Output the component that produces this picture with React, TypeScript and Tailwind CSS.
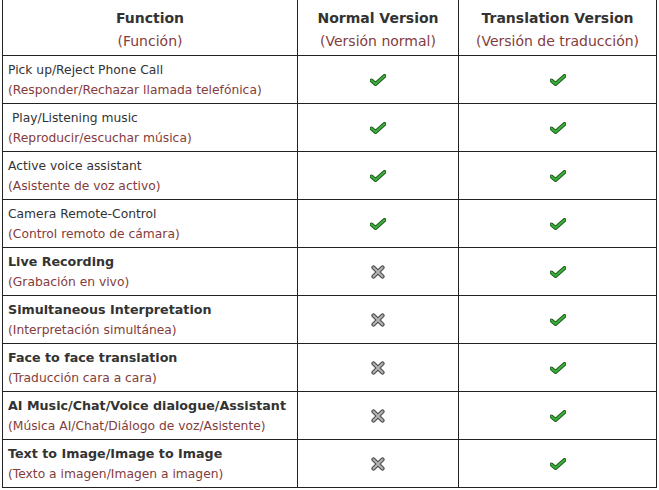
type Row = {
  en: string
  es: string
  bold?: boolean
  normal: boolean
}

const rows: Row[] = [
  { en: "Pick up/Reject Phone Call", es: "(Responder/Rechazar llamada telefónica)", normal: true },
  { en: "\u00a0Play/Listening music", es: "(Reproducir/escuchar música)", normal: true },
  { en: "Active voice assistant", es: "(Asistente de voz activo)", normal: true },
  { en: "Camera Remote-Control", es: "(Control remoto de cámara)", normal: true },
  { en: "Live Recording", es: "(Grabación en vivo)", bold: true, normal: false },
  { en: "Simultaneous Interpretation", es: "(Interpretación simultánea)", bold: true, normal: false },
  { en: "Face to face translation", es: "(Traducción cara a cara)", bold: true, normal: false },
  { en: "AI Music/Chat/Voice dialogue/Assistant", es: "(Música AI/Chat/Diálogo de voz/Asistente)", bold: true, normal: false },
  { en: "Text to Image/Image to Image", es: "(Texto a imagen/Imagen a imagen)", bold: true, normal: false },
]

function Check() {
  return (
    <svg width="16" height="12" viewBox="0 0 16 12" className="inline-block">
      <path
        d="M1.5 6.5 L5.5 10 L14.5 2"
        fill="none"
        stroke="#1f5f1f"
        strokeWidth="4"
        strokeLinecap="round"
        strokeLinejoin="round"
      />
      <path
        d="M1.5 6.5 L5.5 10 L14.5 2"
        fill="none"
        stroke="#3fae3f"
        strokeWidth="2"
        strokeLinecap="round"
        strokeLinejoin="round"
      />
    </svg>
  )
}

function Cross() {
  return (
    <svg width="14" height="14" viewBox="0 0 14 14" className="inline-block">
      <path d="M2.5 2.5 L11.5 11.5 M11.5 2.5 L2.5 11.5" stroke="#4a4a4a" strokeWidth="4.2" strokeLinecap="round" />
      <path d="M2.5 2.5 L11.5 11.5 M11.5 2.5 L2.5 11.5" stroke="#b4b4b4" strokeWidth="2" strokeLinecap="round" />
    </svg>
  )
}

export default function App() {
  return (
    <div className="bg-white pl-[2px] pt-0 font-['DejaVu_Sans',Verdana,sans-serif] text-[#333]">
      <table className="w-[654px] table-fixed border-collapse -mt-px">
        <colgroup>
          <col className="w-[295px]" />
          <col className="w-[161px]" />
          <col className="w-[198px]" />
        </colgroup>
        <thead>
          <tr className="h-[56px]">
            {[
              ["Function", "(Función)"],
              ["Normal Version", "(Versión normal)"],
              ["Translation Version", "(Versión de traducción)"],
            ].map(([en, es]) => (
              <th key={en} className="border border-[#222] p-0 pt-[4px] text-center align-middle">
                <div className="text-[14px] font-bold leading-[23px]">{en}</div>
                <div className="text-[14px] font-normal leading-[23px] text-[#843c3c]">{es}</div>
              </th>
            ))}
          </tr>
        </thead>
        <tbody>
          {rows.map((r) => (
            <tr key={r.en} className="h-[48px]">
              <td className="whitespace-nowrap border border-[#222] px-[5px] py-0 align-middle text-[12.3px] leading-[20px]">
                <div className={r.bold ? "text-[12.7px] font-bold" : ""}>{r.en}</div>
                <div className="text-[#843c3c]">{r.es}</div>
              </td>
              <td className="border border-[#222] p-0 text-center align-middle">
                {r.normal ? <Check /> : <Cross />}
              </td>
              <td className="border border-[#222] p-0 text-center align-middle">
                <Check />
              </td>
            </tr>
          ))}
        </tbody>
      </table>
    </div>
  )
}
